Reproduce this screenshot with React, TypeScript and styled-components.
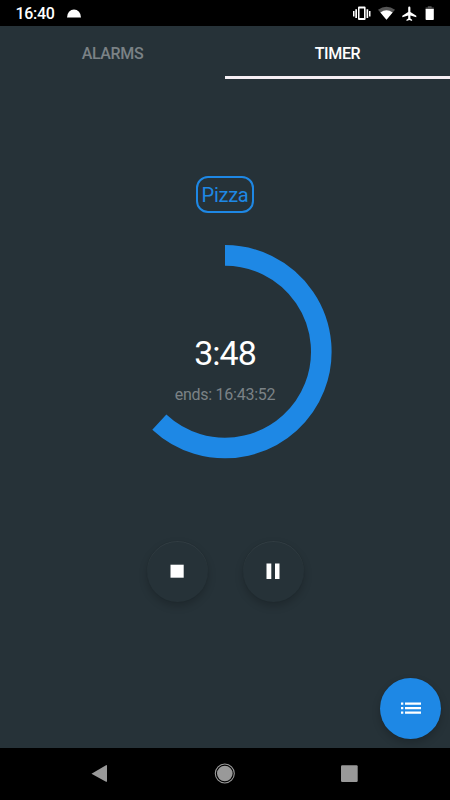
import React from "react";
import styled, { createGlobalStyle } from "styled-components";

const BLUE = "#1e88e5";
const SLATE = "#263238";

const GlobalStyle = createGlobalStyle`
  body { margin: 0; background: ${SLATE}; }
  *, *::before, *::after { box-sizing: border-box; }
  button { font: inherit; border: 0; padding: 0; margin: 0; }
  svg { display: block; }
`;

const Screen = styled.div`
  position: relative;
  display: flex;
  flex-direction: column;
  width: 450px;
  height: 800px;
  overflow: hidden;
  background: ${SLATE};
  color: #fff;
  font-family: Roboto, "Liberation Sans", sans-serif;
`;

const StatusBar = styled.header`
  display: flex;
  align-items: center;
  height: 26px;
  padding: 2px 15px 0 15.5px;
  background: #000;
`;

const Clock = styled.span`
  width: 51.5px;
  font-size: 16px;
  font-weight: 500;
  line-height: 24px;
  letter-spacing: -0.3px;
`;

const StatusIcons = styled.div`
  display: flex;
  align-items: center;
  margin-left: auto;
`;

const TabBar = styled.nav`
  display: grid;
  grid-template-columns: 1fr 1fr;
  height: 53px;
`;

const Tab = styled.button<{ $active?: boolean }>`
  padding-top: 4px;
  background: transparent;
  border-bottom: 3px solid ${(p) => (p.$active ? "#f5eff4" : "transparent")};
  color: ${(p) => (p.$active ? "#fff" : "#7b8286")};
  font-size: 16px;
  font-weight: 500;
  letter-spacing: -0.35px;
`;

const Content = styled.main`
  flex: 1;
  display: flex;
  flex-direction: column;
  align-items: center;
  padding-top: 97px;
`;

const Label = styled.div`
  display: flex;
  align-items: center;
  justify-content: center;
  width: 58px;
  height: 37px;
  border: 2px solid ${BLUE};
  border-radius: 12px;
  color: ${BLUE};
  font-size: 20px;
  line-height: 33px;
  padding-top: 1px;
  letter-spacing: -0.25px;
`;

const Dial = styled.div`
  display: grid;
  width: 214px;
  height: 214px;
  margin-top: 32px;
  > * { grid-area: 1 / 1; }
`;

const Readout = styled.div`
  display: flex;
  flex-direction: column;
  align-items: center;
  padding-top: 88px;
`;

const Remaining = styled.div`
  font-size: 34px;
  line-height: 40px;
  letter-spacing: -1px;
`;

const Ends = styled.div`
  margin-top: 12px;
  font-size: 16px;
  line-height: 20px;
  letter-spacing: -0.25px;
  color: #7b8286;
`;

const Controls = styled.div`
  display: flex;
  gap: 34.5px;
  margin: 81.5px 0 0 0.5px;
`;

const RoundButton = styled.button<{ $accent?: boolean }>`
  display: flex;
  align-items: center;
  justify-content: center;
  width: 61.5px;
  height: 61.5px;
  border-radius: 50%;
  background: ${(p) => (p.$accent ? BLUE : SLATE)};
  box-shadow: 0 4px 9px rgba(0, 0, 0, 0.2), 0 0 1px rgba(0, 0, 0, 0.1)
    ${(p) => (p.$accent ? "" : ", inset 0 1px 0 rgba(255, 255, 255, 0.055)")};
`;

const FloatingAction = styled(RoundButton)`
  position: absolute;
  right: 8.7px;
  bottom: 61px;
`;

const SystemNav = styled.footer`
  display: grid;
  grid-template-columns: 124px 124px 124px;
  justify-content: center;
  justify-items: center;
  align-items: center;
  height: 52px;
  background: #000;
`;

/** Clockwise arc starting at twelve o'clock. */
function ProgressRing({ degrees }: { degrees: number }) {
  const c = 107;
  const r = 96.3;
  const a = (degrees * Math.PI) / 180;
  const x = c + r * Math.sin(a);
  const y = c - r * Math.cos(a);
  return (
    <svg width="214" height="214" viewBox="0 0.3 214 214">
      <path
        d={`M${c} ${c - r}A${r} ${r} 0 ${degrees > 180 ? 1 : 0} 1 ${x} ${y}`}
        fill="none"
        stroke={BLUE}
        strokeWidth="20.6"
      />
    </svg>
  );
}

const StatusGlyphs = () => (
  <svg width="84" height="18" viewBox="351 4.500 84 18" fill="#fff">
    <path d="M353 10.500h1.500v5.500H353zM355.300 8.800h1.700v8.700h-1.700zM366.500 8.800h1.700v8.700h-1.700zM369 10.500h1.500v5.500H369z" />
    <path fillRule="evenodd" d="M359 6h5.600q1 0 1 1v11.500q0 1-1 1H359q-1 0-1-1V7q0-1 1-1zM359.500 8v9.500h4.500V8z" />
    <path fill="#555" d="M378 9.300Q386.500 3 395 9.300L386.500 19.300z" />
    <path d="M380.400 12Q386.500 7.500 392.600 12L386.500 19.300z" />
    <path d="M409.300 6q1.100 0 1.100 1.200v4.300l5.900 3.700v1.500l-5.900-1.800v3.200l1.700 1.100v1.200l-2.800-.8-2.800.8v-1.200l1.700-1.100v-3.200l-5.900 1.800v-1.500l5.900-3.700V7.200q0-1.200 1.100-1.200z" />
    <path fill="#555" d="M427.800 5.800h3.800v1.200h2.200v2h-8.200V7h2.200z" />
    <path d="M425.600 8.500h8.200v10.300q0 .8-.8.800h-6.600q-.8 0-.8-.8z" />
  </svg>
);

const StopIcon = () => (
  <svg width="24" height="24" fill="#fff"><path d="M5.500 5.700h13.200v13H5.500z" /></svg>
);

const PauseIcon = () => (
  <svg width="24" height="24" fill="#fff"><path d="M5.500 4.500h4.800v15.500H5.500zM14 4.500h4.500v15.500H14z" /></svg>
);

const ListIcon = () => (
  <svg width="24" height="24" fill="#fff">
    <path d="M2 6.500h2.300v2.200H2zM2 11h2.300v2.200H2zM2 15.500h2.300v2.200H2zM6 6.500h16v2.200H6zM6 11h16v2.200H6zM6 15.500h16v2.200H6z" />
  </svg>
);

export default function App() {
  return (
    <>
      <GlobalStyle />
      <Screen>
        <StatusBar>
          <Clock>16:40</Clock>
          <svg width="14" height="10" fill="#fff">
            <path d="M0 8.500a7 8 0 0 1 14 0z" />
          </svg>
          <StatusIcons><StatusGlyphs /></StatusIcons>
        </StatusBar>
        <TabBar>
          <Tab>ALARMS</Tab>
          <Tab $active>TIMER</Tab>
        </TabBar>
        <Content>
          <Label>Pizza</Label>
          <Dial>
            <ProgressRing degrees={223} />
            <Readout>
              <Remaining>3:48</Remaining>
              <Ends>ends: 16:43:52</Ends>
            </Readout>
          </Dial>
          <Controls>
            <RoundButton aria-label="Stop"><StopIcon /></RoundButton>
            <RoundButton aria-label="Pause"><PauseIcon /></RoundButton>
          </Controls>
        </Content>
        <FloatingAction $accent aria-label="Timer list"><ListIcon /></FloatingAction>
        <SystemNav>
          <svg width="24" height="24" fill="#999">
            <path d="M2.500 11.700L17 3.200q1-.5 1 .5v15.500q0 1-1 .5z" />
          </svg>
          <svg width="24" height="24">
            <circle cx="11.800" cy="11.500" r="9.500" fill="none" stroke="#999" strokeWidth="1.100" />
            <circle cx="11.800" cy="11.500" r="7.800" fill="#999" />
          </svg>
          <svg width="24" height="24">
            <rect x="4" y="3.300" width="16.700" height="16.700" rx="1.200" fill="#999" />
          </svg>
        </SystemNav>
      </Screen>
    </>
  );
}
